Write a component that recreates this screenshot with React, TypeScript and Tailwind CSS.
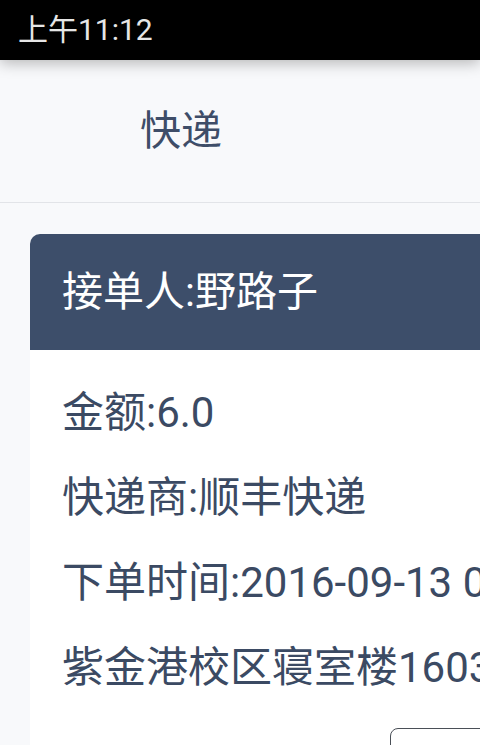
const rows = [
  "金额:6.0",
  "快递商:顺丰快递",
  "下单时间:2016-09-13 09:25",
  "紫金港校区寝室楼1603",
];

export default function App(): JSX.Element {
  return (
    <div
      className="flex flex-col w-[480px] h-[745px] overflow-hidden bg-[#f8f9fb]"
      style={{ fontFamily: 'Roboto, "Noto Sans CJK SC", sans-serif' }}
    >
      <div className="relative z-10 h-[60px] shrink-0 bg-black flex items-center pl-[18px] shadow-[0_3px_14px_rgba(0,0,0,0.28)]">
        <span className="text-[30px] leading-none text-[#e6e6e6]">上午11:12</span>
      </div>
      <header className="h-[143px] shrink-0 flex items-center pl-[140px] border-b border-[#e2e4e8] bg-[#f8f9fb]">
        <h1 className="text-[41px] leading-none text-[#3e4d68]">快递</h1>
      </header>
      <main className="flex-1 pt-[31px] pl-[30px]">
        <div className="w-[520px] rounded-[10px] overflow-hidden bg-white">
          <div className="h-[116px] bg-[#3d4e6a] flex items-center pl-[32px]">
            <span className="text-[41px] leading-none text-white whitespace-nowrap">
              接单人:野路子
            </span>
          </div>
          <div className="pt-[20px] pl-[32px]">
            {rows.map((row) => (
              <div key={row} className="h-[85px] flex items-center">
                <span className="text-[42px] leading-none text-[#3b4a63] whitespace-nowrap">
                  {row}
                </span>
              </div>
            ))}
            <div className="mt-[18px] pl-[328px]">
              <button
                type="button"
                className="w-[140px] h-[60px] rounded-[8px] border border-[#4a4f57] bg-white"
              />
            </div>
          </div>
        </div>
      </main>
    </div>
  );
}
